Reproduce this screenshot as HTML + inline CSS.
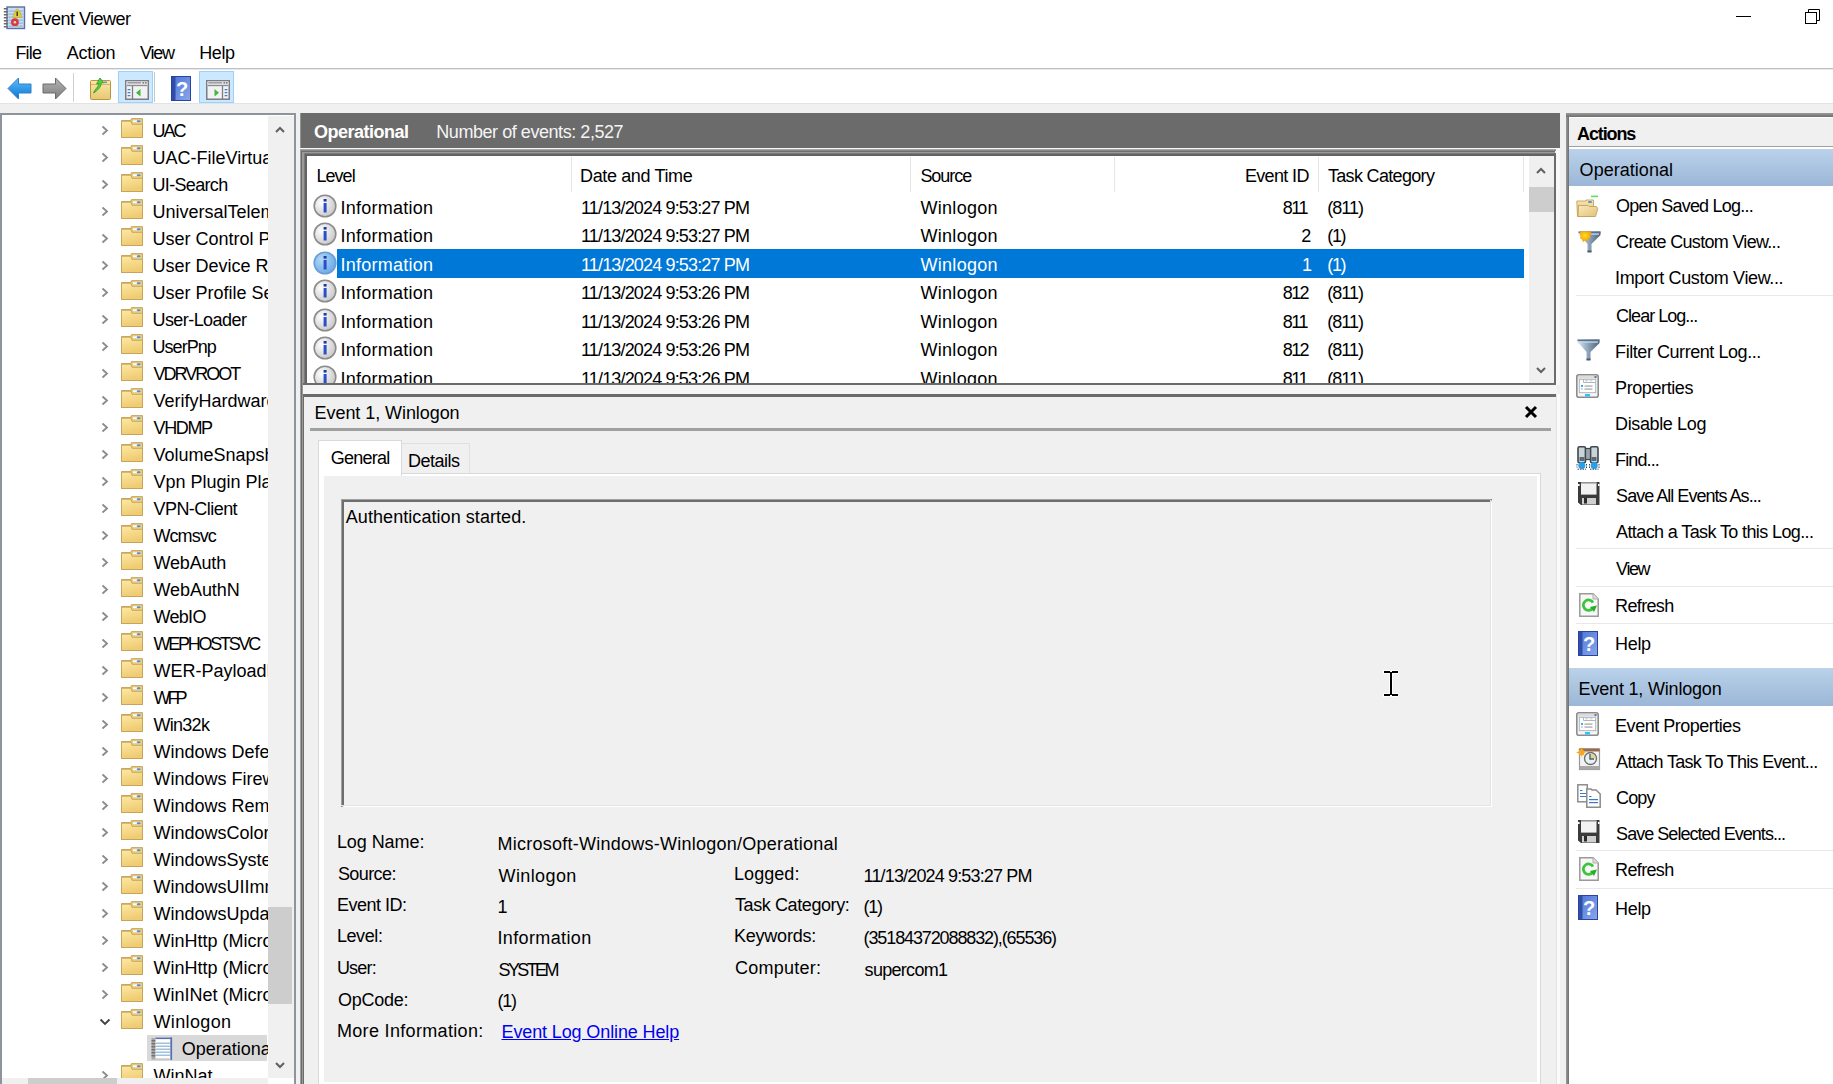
<!DOCTYPE html>
<html><head><meta charset="utf-8"><title>Event Viewer</title><style>
*{box-sizing:border-box}
html,body{margin:0;padding:0}
body{width:1833px;height:1084px;overflow:hidden;position:relative;background:#f0f0f0;font-family:"Liberation Sans",sans-serif;font-size:18px;color:#000}
.a{position:absolute}
.t{position:absolute;white-space:nowrap;line-height:18px;height:18px}
.clip{position:absolute;overflow:hidden}
svg{position:absolute;overflow:visible}
</style></head><body>
<div class="a" style="left:0px;top:0px;width:1833px;height:103px;background:#fff"></div>
<div class="a" style="left:0px;top:68px;width:1833px;height:1px;background:#c0c0c0"></div>
<div class="a" style="left:0px;top:69px;width:1833px;height:1px;background:#e8e8e8"></div>
<div class="a" style="left:0px;top:103px;width:1833px;height:1px;background:#e3e3e3"></div>
<svg style="left:3px;top:6px" width="22" height="23" viewBox="0 0 22 23"><rect x="4" y="1" width="17.5" height="21.5" fill="#c9dcef" stroke="#5a6fa8" stroke-width="1.4"/><rect x="5.5" y="4.5" width="14.5" height="1.3" fill="#9db8dc"/><rect x="5.5" y="7.5" width="14.5" height="1.3" fill="#9db8dc"/><rect x="5.5" y="10.5" width="14.5" height="1.3" fill="#9db8dc"/><rect x="5.5" y="13.5" width="14.5" height="1.3" fill="#9db8dc"/><rect x="5.5" y="16.5" width="14.5" height="1.3" fill="#9db8dc"/><rect x="5.5" y="19.5" width="14.5" height="1.3" fill="#9db8dc"/><rect x="0.8" y="2.0" width="4" height="1.5" fill="#6a6a6a"/><rect x="0.8" y="5.0" width="4" height="1.5" fill="#6a6a6a"/><rect x="0.8" y="8.0" width="4" height="1.5" fill="#6a6a6a"/><rect x="0.8" y="11.0" width="4" height="1.5" fill="#6a6a6a"/><rect x="0.8" y="14.0" width="4" height="1.5" fill="#6a6a6a"/><rect x="0.8" y="17.0" width="4" height="1.5" fill="#6a6a6a"/><rect x="0.8" y="20.0" width="4" height="1.5" fill="#6a6a6a"/><path d="M14.2 3 Q15 3 15.6 4 L18.8 10.5 Q19 11.3 18 11.3 H10.5 Q9.6 11.3 10 10.5 L13 4 Q13.5 3 14.2 3 Z" fill="#e8d02a" stroke="#c8a818" stroke-width="0.6"/><rect x="13.5" y="5.5" width="1.4" height="4.5" fill="#333"/><circle cx="11.9" cy="16.2" r="3.9" fill="#d23c3c"/><circle cx="11.9" cy="16.2" r="1.3" fill="#f4d0d0"/></svg>
<div class="t" style="left:31.10px;top:10px;letter-spacing:-0.539px;">Event Viewer</div>
<div class="a" style="left:1736px;top:16px;width:15px;height:1px;background:#000"></div>
<svg style="left:1804px;top:8px" width="18" height="18" viewBox="0 0 18 18"><rect x="1.5" y="4.5" width="11" height="11" fill="#fff" stroke="#000" stroke-width="1"/><path d="M4.5 4.5 V1.5 H15.5 V12.5 H12.5" fill="none" stroke="#000" stroke-width="1"/></svg>
<div class="t" style="left:15.40px;top:44px;letter-spacing:-0.764px;">File</div>
<div class="t" style="left:66.80px;top:44px;letter-spacing:-0.263px;">Action</div>
<div class="t" style="left:140.00px;top:44px;letter-spacing:-1.230px;">View</div>
<div class="t" style="left:199.30px;top:44px;letter-spacing:-0.436px;">Help</div>
<svg style="left:7px;top:77px" width="26" height="23" viewBox="0 0 26 23"><defs><linearGradient id="gb" x1="0" y1="0" x2="0" y2="1"><stop offset="0" stop-color="#5fc0ff"/><stop offset="1" stop-color="#0a74d0"/></linearGradient></defs><path d="M1 11.5 L11.5 1 V7 H24 V16 H11.5 V22 Z" fill="url(#gb)" stroke="#2f80c8" stroke-width="1"/></svg>
<svg style="left:41px;top:77px" width="26" height="23" viewBox="0 0 26 23"><defs><linearGradient id="gg" x1="0" y1="0" x2="0" y2="1"><stop offset="0" stop-color="#b5b5b5"/><stop offset="1" stop-color="#7d7d7d"/></linearGradient></defs><path d="M25 11.5 L14.5 1 V7 H2 V16 H14.5 V22 Z" fill="url(#gg)" stroke="#6a6a6a" stroke-width="1"/></svg>
<div class="a" style="left:73px;top:73px;width:1px;height:29px;background:#d0d0d0"></div>
<svg style="left:89px;top:77px" width="23" height="23" viewBox="0 0 23 23"><defs><linearGradient id="gfu" x1="0" y1="0" x2="0" y2="1"><stop offset="0" stop-color="#fbe7a8"/><stop offset="1" stop-color="#e9c774"/></linearGradient></defs><rect x="1.5" y="3.5" width="20" height="19" rx="1" fill="url(#gfu)" stroke="#b8963c" stroke-width="1"/><path d="M2 7.5 H21" stroke="#d8b660" stroke-width="1"/><rect x="15" y="4.5" width="3" height="1.6" fill="#5a9ae0"/><path d="M4.5 16 C6 12 9.5 10 10 6.5 L7.5 7 L11 1 L14.8 5.8 L12.3 5.8 C12 10.5 8.5 13.5 4.5 16 Z" fill="#50d040" stroke="#2e9a22" stroke-width="0.8"/></svg>
<div class="a" style="left:118px;top:71px;width:35px;height:32px;background:#cce8ff;border:1px solid #99d1ff"></div>
<svg style="left:124.5px;top:80px" width="24" height="20" viewBox="0 0 24 20"><rect x="0.75" y="0.75" width="22.5" height="18.5" fill="#f2f2f2" stroke="#7a7d84" stroke-width="1.5"/><rect x="1.5" y="1.5" width="21" height="5" fill="#e4e4e4"/><path d="M2.5 2.8 H16" stroke="#8a8d94" stroke-width="1.2"/><rect x="17.5" y="2" width="1.6" height="1.6" fill="#7a7d84"/><rect x="20" y="2" width="1.6" height="1.6" fill="#7a7d84"/><path d="M1.5 5.5 H22.5" stroke="#8a8d94" stroke-width="1.2"/><path d="M7.5 6 V19" stroke="#7a7d84" stroke-width="1.3"/><rect x="2.5" y="9" width="3" height="1.3" rx="0.6" fill="#4a7ad0"/><rect x="2.5" y="12" width="3" height="1.3" rx="0.6" fill="#4a7ad0"/><rect x="2.5" y="15" width="3" height="1.3" rx="0.6" fill="#4a7ad0"/><path d="M15.5 9 V16.5 L11 12.7 Z" fill="#3cb83c"/></svg>
<div class="a" style="left:154px;top:72px;width:1px;height:30px;background:#c8c8c8"></div>
<svg style="left:171px;top:76px" width="20" height="25" viewBox="0 0 20 25"><defs><linearGradient id="gh" x1="0" y1="0" x2="1" y2="1"><stop offset="0" stop-color="#4a74d8"/><stop offset="1" stop-color="#8aa8ea"/></linearGradient></defs><rect x="0" y="0" width="20" height="25" fill="url(#gh)"/><rect x="0" y="0" width="4.5" height="25" fill="#2f4ea8"/><rect x="0.5" y="0.5" width="19" height="24" fill="none" stroke="#2a43a0" stroke-width="1"/><text x="11" y="20" text-anchor="middle" font-family="Liberation Sans" font-weight="bold" font-size="20" fill="#fff">?</text></svg>
<div class="a" style="left:199px;top:71px;width:35px;height:32px;background:#cce8ff;border:1px solid #99d1ff"></div>
<svg style="left:205.5px;top:80px" width="24" height="20" viewBox="0 0 24 20"><rect x="0.75" y="0.75" width="22.5" height="18.5" fill="#f2f2f2" stroke="#7a7d84" stroke-width="1.5"/><rect x="1.5" y="1.5" width="21" height="5" fill="#e4e4e4"/><path d="M2.5 2.8 H16" stroke="#8a8d94" stroke-width="1.2"/><rect x="17.5" y="2" width="1.6" height="1.6" fill="#7a7d84"/><rect x="20" y="2" width="1.6" height="1.6" fill="#7a7d84"/><path d="M1.5 5.5 H22.5" stroke="#8a8d94" stroke-width="1.2"/><path d="M16.5 6 V19" stroke="#7a7d84" stroke-width="1.3"/><rect x="18.5" y="9" width="3" height="1.3" rx="0.6" fill="#4a7ad0"/><rect x="18.5" y="12" width="3" height="1.3" rx="0.6" fill="#4a7ad0"/><rect x="18.5" y="15" width="3" height="1.3" rx="0.6" fill="#4a7ad0"/><path d="M8.5 9 V16.5 L13 12.7 Z" fill="#3cb83c"/></svg>
<div class="a" style="left:0px;top:113px;width:296px;height:971px;background:#fff;border:2px solid #8f939b;border-bottom:none"></div>
<div class="clip" style="left:2px;top:115px;width:266px;height:963px">
<svg style="left:99px;top:10px" width="8" height="11" viewBox="0 0 8 11"><path d="M1.5 1.5 L6 5.5 L1.5 9.5" fill="none" stroke="#8a8a8a" stroke-width="1.8"/></svg>
<svg style="left:119px;top:3px" width="22" height="20" viewBox="0 0 22 20"><defs><linearGradient id="gfd" x1="0" y1="0" x2="0.3" y2="1"><stop offset="0" stop-color="#fde9a4"/><stop offset="1" stop-color="#efcb72"/></linearGradient></defs><path d="M0.5 2.5 H9.5 L10.5 0.6 H21.5 V19.5 H0.5 Z" fill="#e3c06e" stroke="#c4a25a" stroke-width="0.9"/><rect x="11.2" y="1.5" width="9.6" height="4.5" fill="#ead08a"/><rect x="12" y="2.4" width="5" height="1.7" fill="#fff"/><ellipse cx="17.6" cy="3.2" rx="2" ry="1" fill="#4a90e0"/><path d="M0.5 3.2 H10 L11 6.3 H21.5 V19.5 H0.5 Z" fill="url(#gfd)" stroke="#c4a25a" stroke-width="0.9"/></svg>
<div class="t" style="left:150.50px;top:7px;letter-spacing:-2.002px;">UAC</div>
<svg style="left:99px;top:37px" width="8" height="11" viewBox="0 0 8 11"><path d="M1.5 1.5 L6 5.5 L1.5 9.5" fill="none" stroke="#8a8a8a" stroke-width="1.8"/></svg>
<svg style="left:119px;top:30px" width="22" height="20" viewBox="0 0 22 20"><defs><linearGradient id="gfd" x1="0" y1="0" x2="0.3" y2="1"><stop offset="0" stop-color="#fde9a4"/><stop offset="1" stop-color="#efcb72"/></linearGradient></defs><path d="M0.5 2.5 H9.5 L10.5 0.6 H21.5 V19.5 H0.5 Z" fill="#e3c06e" stroke="#c4a25a" stroke-width="0.9"/><rect x="11.2" y="1.5" width="9.6" height="4.5" fill="#ead08a"/><rect x="12" y="2.4" width="5" height="1.7" fill="#fff"/><ellipse cx="17.6" cy="3.2" rx="2" ry="1" fill="#4a90e0"/><path d="M0.5 3.2 H10 L11 6.3 H21.5 V19.5 H0.5 Z" fill="url(#gfd)" stroke="#c4a25a" stroke-width="0.9"/></svg>
<div class="t" style="left:150.50px;top:34px;letter-spacing:0.000px;letter-spacing:0px">UAC-FileVirtualization</div>
<svg style="left:99px;top:64px" width="8" height="11" viewBox="0 0 8 11"><path d="M1.5 1.5 L6 5.5 L1.5 9.5" fill="none" stroke="#8a8a8a" stroke-width="1.8"/></svg>
<svg style="left:119px;top:57px" width="22" height="20" viewBox="0 0 22 20"><defs><linearGradient id="gfd" x1="0" y1="0" x2="0.3" y2="1"><stop offset="0" stop-color="#fde9a4"/><stop offset="1" stop-color="#efcb72"/></linearGradient></defs><path d="M0.5 2.5 H9.5 L10.5 0.6 H21.5 V19.5 H0.5 Z" fill="#e3c06e" stroke="#c4a25a" stroke-width="0.9"/><rect x="11.2" y="1.5" width="9.6" height="4.5" fill="#ead08a"/><rect x="12" y="2.4" width="5" height="1.7" fill="#fff"/><ellipse cx="17.6" cy="3.2" rx="2" ry="1" fill="#4a90e0"/><path d="M0.5 3.2 H10 L11 6.3 H21.5 V19.5 H0.5 Z" fill="url(#gfd)" stroke="#c4a25a" stroke-width="0.9"/></svg>
<div class="t" style="left:150.50px;top:61px;letter-spacing:-0.664px;">UI-Search</div>
<svg style="left:99px;top:91px" width="8" height="11" viewBox="0 0 8 11"><path d="M1.5 1.5 L6 5.5 L1.5 9.5" fill="none" stroke="#8a8a8a" stroke-width="1.8"/></svg>
<svg style="left:119px;top:84px" width="22" height="20" viewBox="0 0 22 20"><defs><linearGradient id="gfd" x1="0" y1="0" x2="0.3" y2="1"><stop offset="0" stop-color="#fde9a4"/><stop offset="1" stop-color="#efcb72"/></linearGradient></defs><path d="M0.5 2.5 H9.5 L10.5 0.6 H21.5 V19.5 H0.5 Z" fill="#e3c06e" stroke="#c4a25a" stroke-width="0.9"/><rect x="11.2" y="1.5" width="9.6" height="4.5" fill="#ead08a"/><rect x="12" y="2.4" width="5" height="1.7" fill="#fff"/><ellipse cx="17.6" cy="3.2" rx="2" ry="1" fill="#4a90e0"/><path d="M0.5 3.2 H10 L11 6.3 H21.5 V19.5 H0.5 Z" fill="url(#gfd)" stroke="#c4a25a" stroke-width="0.9"/></svg>
<div class="t" style="left:150.50px;top:88px;letter-spacing:0.000px;letter-spacing:0px">UniversalTelemetryClient</div>
<svg style="left:99px;top:118px" width="8" height="11" viewBox="0 0 8 11"><path d="M1.5 1.5 L6 5.5 L1.5 9.5" fill="none" stroke="#8a8a8a" stroke-width="1.8"/></svg>
<svg style="left:119px;top:111px" width="22" height="20" viewBox="0 0 22 20"><defs><linearGradient id="gfd" x1="0" y1="0" x2="0.3" y2="1"><stop offset="0" stop-color="#fde9a4"/><stop offset="1" stop-color="#efcb72"/></linearGradient></defs><path d="M0.5 2.5 H9.5 L10.5 0.6 H21.5 V19.5 H0.5 Z" fill="#e3c06e" stroke="#c4a25a" stroke-width="0.9"/><rect x="11.2" y="1.5" width="9.6" height="4.5" fill="#ead08a"/><rect x="12" y="2.4" width="5" height="1.7" fill="#fff"/><ellipse cx="17.6" cy="3.2" rx="2" ry="1" fill="#4a90e0"/><path d="M0.5 3.2 H10 L11 6.3 H21.5 V19.5 H0.5 Z" fill="url(#gfd)" stroke="#c4a25a" stroke-width="0.9"/></svg>
<div class="t" style="left:150.50px;top:115px;letter-spacing:0.000px;letter-spacing:0px">User Control Panel</div>
<svg style="left:99px;top:145px" width="8" height="11" viewBox="0 0 8 11"><path d="M1.5 1.5 L6 5.5 L1.5 9.5" fill="none" stroke="#8a8a8a" stroke-width="1.8"/></svg>
<svg style="left:119px;top:138px" width="22" height="20" viewBox="0 0 22 20"><defs><linearGradient id="gfd" x1="0" y1="0" x2="0.3" y2="1"><stop offset="0" stop-color="#fde9a4"/><stop offset="1" stop-color="#efcb72"/></linearGradient></defs><path d="M0.5 2.5 H9.5 L10.5 0.6 H21.5 V19.5 H0.5 Z" fill="#e3c06e" stroke="#c4a25a" stroke-width="0.9"/><rect x="11.2" y="1.5" width="9.6" height="4.5" fill="#ead08a"/><rect x="12" y="2.4" width="5" height="1.7" fill="#fff"/><ellipse cx="17.6" cy="3.2" rx="2" ry="1" fill="#4a90e0"/><path d="M0.5 3.2 H10 L11 6.3 H21.5 V19.5 H0.5 Z" fill="url(#gfd)" stroke="#c4a25a" stroke-width="0.9"/></svg>
<div class="t" style="left:150.50px;top:142px;letter-spacing:0.000px;letter-spacing:0px">User Device Registration</div>
<svg style="left:99px;top:172px" width="8" height="11" viewBox="0 0 8 11"><path d="M1.5 1.5 L6 5.5 L1.5 9.5" fill="none" stroke="#8a8a8a" stroke-width="1.8"/></svg>
<svg style="left:119px;top:165px" width="22" height="20" viewBox="0 0 22 20"><defs><linearGradient id="gfd" x1="0" y1="0" x2="0.3" y2="1"><stop offset="0" stop-color="#fde9a4"/><stop offset="1" stop-color="#efcb72"/></linearGradient></defs><path d="M0.5 2.5 H9.5 L10.5 0.6 H21.5 V19.5 H0.5 Z" fill="#e3c06e" stroke="#c4a25a" stroke-width="0.9"/><rect x="11.2" y="1.5" width="9.6" height="4.5" fill="#ead08a"/><rect x="12" y="2.4" width="5" height="1.7" fill="#fff"/><ellipse cx="17.6" cy="3.2" rx="2" ry="1" fill="#4a90e0"/><path d="M0.5 3.2 H10 L11 6.3 H21.5 V19.5 H0.5 Z" fill="url(#gfd)" stroke="#c4a25a" stroke-width="0.9"/></svg>
<div class="t" style="left:150.50px;top:169px;letter-spacing:0.000px;letter-spacing:0px">User Profile Service</div>
<svg style="left:99px;top:199px" width="8" height="11" viewBox="0 0 8 11"><path d="M1.5 1.5 L6 5.5 L1.5 9.5" fill="none" stroke="#8a8a8a" stroke-width="1.8"/></svg>
<svg style="left:119px;top:192px" width="22" height="20" viewBox="0 0 22 20"><defs><linearGradient id="gfd" x1="0" y1="0" x2="0.3" y2="1"><stop offset="0" stop-color="#fde9a4"/><stop offset="1" stop-color="#efcb72"/></linearGradient></defs><path d="M0.5 2.5 H9.5 L10.5 0.6 H21.5 V19.5 H0.5 Z" fill="#e3c06e" stroke="#c4a25a" stroke-width="0.9"/><rect x="11.2" y="1.5" width="9.6" height="4.5" fill="#ead08a"/><rect x="12" y="2.4" width="5" height="1.7" fill="#fff"/><ellipse cx="17.6" cy="3.2" rx="2" ry="1" fill="#4a90e0"/><path d="M0.5 3.2 H10 L11 6.3 H21.5 V19.5 H0.5 Z" fill="url(#gfd)" stroke="#c4a25a" stroke-width="0.9"/></svg>
<div class="t" style="left:150.50px;top:196px;letter-spacing:-0.565px;">User-Loader</div>
<svg style="left:99px;top:226px" width="8" height="11" viewBox="0 0 8 11"><path d="M1.5 1.5 L6 5.5 L1.5 9.5" fill="none" stroke="#8a8a8a" stroke-width="1.8"/></svg>
<svg style="left:119px;top:219px" width="22" height="20" viewBox="0 0 22 20"><defs><linearGradient id="gfd" x1="0" y1="0" x2="0.3" y2="1"><stop offset="0" stop-color="#fde9a4"/><stop offset="1" stop-color="#efcb72"/></linearGradient></defs><path d="M0.5 2.5 H9.5 L10.5 0.6 H21.5 V19.5 H0.5 Z" fill="#e3c06e" stroke="#c4a25a" stroke-width="0.9"/><rect x="11.2" y="1.5" width="9.6" height="4.5" fill="#ead08a"/><rect x="12" y="2.4" width="5" height="1.7" fill="#fff"/><ellipse cx="17.6" cy="3.2" rx="2" ry="1" fill="#4a90e0"/><path d="M0.5 3.2 H10 L11 6.3 H21.5 V19.5 H0.5 Z" fill="url(#gfd)" stroke="#c4a25a" stroke-width="0.9"/></svg>
<div class="t" style="left:150.50px;top:223px;letter-spacing:-0.953px;">UserPnp</div>
<svg style="left:99px;top:253px" width="8" height="11" viewBox="0 0 8 11"><path d="M1.5 1.5 L6 5.5 L1.5 9.5" fill="none" stroke="#8a8a8a" stroke-width="1.8"/></svg>
<svg style="left:119px;top:246px" width="22" height="20" viewBox="0 0 22 20"><defs><linearGradient id="gfd" x1="0" y1="0" x2="0.3" y2="1"><stop offset="0" stop-color="#fde9a4"/><stop offset="1" stop-color="#efcb72"/></linearGradient></defs><path d="M0.5 2.5 H9.5 L10.5 0.6 H21.5 V19.5 H0.5 Z" fill="#e3c06e" stroke="#c4a25a" stroke-width="0.9"/><rect x="11.2" y="1.5" width="9.6" height="4.5" fill="#ead08a"/><rect x="12" y="2.4" width="5" height="1.7" fill="#fff"/><ellipse cx="17.6" cy="3.2" rx="2" ry="1" fill="#4a90e0"/><path d="M0.5 3.2 H10 L11 6.3 H21.5 V19.5 H0.5 Z" fill="url(#gfd)" stroke="#c4a25a" stroke-width="0.9"/></svg>
<div class="t" style="left:151.50px;top:250px;letter-spacing:-1.984px;">VDRVROOT</div>
<svg style="left:99px;top:280px" width="8" height="11" viewBox="0 0 8 11"><path d="M1.5 1.5 L6 5.5 L1.5 9.5" fill="none" stroke="#8a8a8a" stroke-width="1.8"/></svg>
<svg style="left:119px;top:273px" width="22" height="20" viewBox="0 0 22 20"><defs><linearGradient id="gfd" x1="0" y1="0" x2="0.3" y2="1"><stop offset="0" stop-color="#fde9a4"/><stop offset="1" stop-color="#efcb72"/></linearGradient></defs><path d="M0.5 2.5 H9.5 L10.5 0.6 H21.5 V19.5 H0.5 Z" fill="#e3c06e" stroke="#c4a25a" stroke-width="0.9"/><rect x="11.2" y="1.5" width="9.6" height="4.5" fill="#ead08a"/><rect x="12" y="2.4" width="5" height="1.7" fill="#fff"/><ellipse cx="17.6" cy="3.2" rx="2" ry="1" fill="#4a90e0"/><path d="M0.5 3.2 H10 L11 6.3 H21.5 V19.5 H0.5 Z" fill="url(#gfd)" stroke="#c4a25a" stroke-width="0.9"/></svg>
<div class="t" style="left:151.50px;top:277px;letter-spacing:0.000px;letter-spacing:0px">VerifyHardwareSecurity</div>
<svg style="left:99px;top:307px" width="8" height="11" viewBox="0 0 8 11"><path d="M1.5 1.5 L6 5.5 L1.5 9.5" fill="none" stroke="#8a8a8a" stroke-width="1.8"/></svg>
<svg style="left:119px;top:300px" width="22" height="20" viewBox="0 0 22 20"><defs><linearGradient id="gfd" x1="0" y1="0" x2="0.3" y2="1"><stop offset="0" stop-color="#fde9a4"/><stop offset="1" stop-color="#efcb72"/></linearGradient></defs><path d="M0.5 2.5 H9.5 L10.5 0.6 H21.5 V19.5 H0.5 Z" fill="#e3c06e" stroke="#c4a25a" stroke-width="0.9"/><rect x="11.2" y="1.5" width="9.6" height="4.5" fill="#ead08a"/><rect x="12" y="2.4" width="5" height="1.7" fill="#fff"/><ellipse cx="17.6" cy="3.2" rx="2" ry="1" fill="#4a90e0"/><path d="M0.5 3.2 H10 L11 6.3 H21.5 V19.5 H0.5 Z" fill="url(#gfd)" stroke="#c4a25a" stroke-width="0.9"/></svg>
<div class="t" style="left:151.50px;top:304px;letter-spacing:-1.375px;">VHDMP</div>
<svg style="left:99px;top:334px" width="8" height="11" viewBox="0 0 8 11"><path d="M1.5 1.5 L6 5.5 L1.5 9.5" fill="none" stroke="#8a8a8a" stroke-width="1.8"/></svg>
<svg style="left:119px;top:327px" width="22" height="20" viewBox="0 0 22 20"><defs><linearGradient id="gfd" x1="0" y1="0" x2="0.3" y2="1"><stop offset="0" stop-color="#fde9a4"/><stop offset="1" stop-color="#efcb72"/></linearGradient></defs><path d="M0.5 2.5 H9.5 L10.5 0.6 H21.5 V19.5 H0.5 Z" fill="#e3c06e" stroke="#c4a25a" stroke-width="0.9"/><rect x="11.2" y="1.5" width="9.6" height="4.5" fill="#ead08a"/><rect x="12" y="2.4" width="5" height="1.7" fill="#fff"/><ellipse cx="17.6" cy="3.2" rx="2" ry="1" fill="#4a90e0"/><path d="M0.5 3.2 H10 L11 6.3 H21.5 V19.5 H0.5 Z" fill="url(#gfd)" stroke="#c4a25a" stroke-width="0.9"/></svg>
<div class="t" style="left:151.50px;top:331px;letter-spacing:0.000px;letter-spacing:0px">VolumeSnapshot-Driver</div>
<svg style="left:99px;top:361px" width="8" height="11" viewBox="0 0 8 11"><path d="M1.5 1.5 L6 5.5 L1.5 9.5" fill="none" stroke="#8a8a8a" stroke-width="1.8"/></svg>
<svg style="left:119px;top:354px" width="22" height="20" viewBox="0 0 22 20"><defs><linearGradient id="gfd" x1="0" y1="0" x2="0.3" y2="1"><stop offset="0" stop-color="#fde9a4"/><stop offset="1" stop-color="#efcb72"/></linearGradient></defs><path d="M0.5 2.5 H9.5 L10.5 0.6 H21.5 V19.5 H0.5 Z" fill="#e3c06e" stroke="#c4a25a" stroke-width="0.9"/><rect x="11.2" y="1.5" width="9.6" height="4.5" fill="#ead08a"/><rect x="12" y="2.4" width="5" height="1.7" fill="#fff"/><ellipse cx="17.6" cy="3.2" rx="2" ry="1" fill="#4a90e0"/><path d="M0.5 3.2 H10 L11 6.3 H21.5 V19.5 H0.5 Z" fill="url(#gfd)" stroke="#c4a25a" stroke-width="0.9"/></svg>
<div class="t" style="left:151.50px;top:358px;letter-spacing:0.000px;letter-spacing:0px">Vpn Plugin Platform</div>
<svg style="left:99px;top:388px" width="8" height="11" viewBox="0 0 8 11"><path d="M1.5 1.5 L6 5.5 L1.5 9.5" fill="none" stroke="#8a8a8a" stroke-width="1.8"/></svg>
<svg style="left:119px;top:381px" width="22" height="20" viewBox="0 0 22 20"><defs><linearGradient id="gfd" x1="0" y1="0" x2="0.3" y2="1"><stop offset="0" stop-color="#fde9a4"/><stop offset="1" stop-color="#efcb72"/></linearGradient></defs><path d="M0.5 2.5 H9.5 L10.5 0.6 H21.5 V19.5 H0.5 Z" fill="#e3c06e" stroke="#c4a25a" stroke-width="0.9"/><rect x="11.2" y="1.5" width="9.6" height="4.5" fill="#ead08a"/><rect x="12" y="2.4" width="5" height="1.7" fill="#fff"/><ellipse cx="17.6" cy="3.2" rx="2" ry="1" fill="#4a90e0"/><path d="M0.5 3.2 H10 L11 6.3 H21.5 V19.5 H0.5 Z" fill="url(#gfd)" stroke="#c4a25a" stroke-width="0.9"/></svg>
<div class="t" style="left:151.50px;top:385px;letter-spacing:-0.547px;">VPN-Client</div>
<svg style="left:99px;top:415px" width="8" height="11" viewBox="0 0 8 11"><path d="M1.5 1.5 L6 5.5 L1.5 9.5" fill="none" stroke="#8a8a8a" stroke-width="1.8"/></svg>
<svg style="left:119px;top:408px" width="22" height="20" viewBox="0 0 22 20"><defs><linearGradient id="gfd" x1="0" y1="0" x2="0.3" y2="1"><stop offset="0" stop-color="#fde9a4"/><stop offset="1" stop-color="#efcb72"/></linearGradient></defs><path d="M0.5 2.5 H9.5 L10.5 0.6 H21.5 V19.5 H0.5 Z" fill="#e3c06e" stroke="#c4a25a" stroke-width="0.9"/><rect x="11.2" y="1.5" width="9.6" height="4.5" fill="#ead08a"/><rect x="12" y="2.4" width="5" height="1.7" fill="#fff"/><ellipse cx="17.6" cy="3.2" rx="2" ry="1" fill="#4a90e0"/><path d="M0.5 3.2 H10 L11 6.3 H21.5 V19.5 H0.5 Z" fill="url(#gfd)" stroke="#c4a25a" stroke-width="0.9"/></svg>
<div class="t" style="left:151.50px;top:412px;letter-spacing:-0.937px;">Wcmsvc</div>
<svg style="left:99px;top:442px" width="8" height="11" viewBox="0 0 8 11"><path d="M1.5 1.5 L6 5.5 L1.5 9.5" fill="none" stroke="#8a8a8a" stroke-width="1.8"/></svg>
<svg style="left:119px;top:435px" width="22" height="20" viewBox="0 0 22 20"><defs><linearGradient id="gfd" x1="0" y1="0" x2="0.3" y2="1"><stop offset="0" stop-color="#fde9a4"/><stop offset="1" stop-color="#efcb72"/></linearGradient></defs><path d="M0.5 2.5 H9.5 L10.5 0.6 H21.5 V19.5 H0.5 Z" fill="#e3c06e" stroke="#c4a25a" stroke-width="0.9"/><rect x="11.2" y="1.5" width="9.6" height="4.5" fill="#ead08a"/><rect x="12" y="2.4" width="5" height="1.7" fill="#fff"/><ellipse cx="17.6" cy="3.2" rx="2" ry="1" fill="#4a90e0"/><path d="M0.5 3.2 H10 L11 6.3 H21.5 V19.5 H0.5 Z" fill="url(#gfd)" stroke="#c4a25a" stroke-width="0.9"/></svg>
<div class="t" style="left:151.50px;top:439px;letter-spacing:-0.167px;">WebAuth</div>
<svg style="left:99px;top:469px" width="8" height="11" viewBox="0 0 8 11"><path d="M1.5 1.5 L6 5.5 L1.5 9.5" fill="none" stroke="#8a8a8a" stroke-width="1.8"/></svg>
<svg style="left:119px;top:462px" width="22" height="20" viewBox="0 0 22 20"><defs><linearGradient id="gfd" x1="0" y1="0" x2="0.3" y2="1"><stop offset="0" stop-color="#fde9a4"/><stop offset="1" stop-color="#efcb72"/></linearGradient></defs><path d="M0.5 2.5 H9.5 L10.5 0.6 H21.5 V19.5 H0.5 Z" fill="#e3c06e" stroke="#c4a25a" stroke-width="0.9"/><rect x="11.2" y="1.5" width="9.6" height="4.5" fill="#ead08a"/><rect x="12" y="2.4" width="5" height="1.7" fill="#fff"/><ellipse cx="17.6" cy="3.2" rx="2" ry="1" fill="#4a90e0"/><path d="M0.5 3.2 H10 L11 6.3 H21.5 V19.5 H0.5 Z" fill="url(#gfd)" stroke="#c4a25a" stroke-width="0.9"/></svg>
<div class="t" style="left:151.50px;top:466px;letter-spacing:-0.073px;">WebAuthN</div>
<svg style="left:99px;top:496px" width="8" height="11" viewBox="0 0 8 11"><path d="M1.5 1.5 L6 5.5 L1.5 9.5" fill="none" stroke="#8a8a8a" stroke-width="1.8"/></svg>
<svg style="left:119px;top:489px" width="22" height="20" viewBox="0 0 22 20"><defs><linearGradient id="gfd" x1="0" y1="0" x2="0.3" y2="1"><stop offset="0" stop-color="#fde9a4"/><stop offset="1" stop-color="#efcb72"/></linearGradient></defs><path d="M0.5 2.5 H9.5 L10.5 0.6 H21.5 V19.5 H0.5 Z" fill="#e3c06e" stroke="#c4a25a" stroke-width="0.9"/><rect x="11.2" y="1.5" width="9.6" height="4.5" fill="#ead08a"/><rect x="12" y="2.4" width="5" height="1.7" fill="#fff"/><ellipse cx="17.6" cy="3.2" rx="2" ry="1" fill="#4a90e0"/><path d="M0.5 3.2 H10 L11 6.3 H21.5 V19.5 H0.5 Z" fill="url(#gfd)" stroke="#c4a25a" stroke-width="0.9"/></svg>
<div class="t" style="left:151.50px;top:493px;letter-spacing:-0.697px;">WebIO</div>
<svg style="left:99px;top:523px" width="8" height="11" viewBox="0 0 8 11"><path d="M1.5 1.5 L6 5.5 L1.5 9.5" fill="none" stroke="#8a8a8a" stroke-width="1.8"/></svg>
<svg style="left:119px;top:516px" width="22" height="20" viewBox="0 0 22 20"><defs><linearGradient id="gfd" x1="0" y1="0" x2="0.3" y2="1"><stop offset="0" stop-color="#fde9a4"/><stop offset="1" stop-color="#efcb72"/></linearGradient></defs><path d="M0.5 2.5 H9.5 L10.5 0.6 H21.5 V19.5 H0.5 Z" fill="#e3c06e" stroke="#c4a25a" stroke-width="0.9"/><rect x="11.2" y="1.5" width="9.6" height="4.5" fill="#ead08a"/><rect x="12" y="2.4" width="5" height="1.7" fill="#fff"/><ellipse cx="17.6" cy="3.2" rx="2" ry="1" fill="#4a90e0"/><path d="M0.5 3.2 H10 L11 6.3 H21.5 V19.5 H0.5 Z" fill="url(#gfd)" stroke="#c4a25a" stroke-width="0.9"/></svg>
<div class="t" style="left:151.50px;top:520px;letter-spacing:-2.246px;">WEPHOSTSVC</div>
<svg style="left:99px;top:550px" width="8" height="11" viewBox="0 0 8 11"><path d="M1.5 1.5 L6 5.5 L1.5 9.5" fill="none" stroke="#8a8a8a" stroke-width="1.8"/></svg>
<svg style="left:119px;top:543px" width="22" height="20" viewBox="0 0 22 20"><defs><linearGradient id="gfd" x1="0" y1="0" x2="0.3" y2="1"><stop offset="0" stop-color="#fde9a4"/><stop offset="1" stop-color="#efcb72"/></linearGradient></defs><path d="M0.5 2.5 H9.5 L10.5 0.6 H21.5 V19.5 H0.5 Z" fill="#e3c06e" stroke="#c4a25a" stroke-width="0.9"/><rect x="11.2" y="1.5" width="9.6" height="4.5" fill="#ead08a"/><rect x="12" y="2.4" width="5" height="1.7" fill="#fff"/><ellipse cx="17.6" cy="3.2" rx="2" ry="1" fill="#4a90e0"/><path d="M0.5 3.2 H10 L11 6.3 H21.5 V19.5 H0.5 Z" fill="url(#gfd)" stroke="#c4a25a" stroke-width="0.9"/></svg>
<div class="t" style="left:151.50px;top:547px;letter-spacing:0.000px;letter-spacing:0px">WER-PayloadHealth</div>
<svg style="left:99px;top:577px" width="8" height="11" viewBox="0 0 8 11"><path d="M1.5 1.5 L6 5.5 L1.5 9.5" fill="none" stroke="#8a8a8a" stroke-width="1.8"/></svg>
<svg style="left:119px;top:570px" width="22" height="20" viewBox="0 0 22 20"><defs><linearGradient id="gfd" x1="0" y1="0" x2="0.3" y2="1"><stop offset="0" stop-color="#fde9a4"/><stop offset="1" stop-color="#efcb72"/></linearGradient></defs><path d="M0.5 2.5 H9.5 L10.5 0.6 H21.5 V19.5 H0.5 Z" fill="#e3c06e" stroke="#c4a25a" stroke-width="0.9"/><rect x="11.2" y="1.5" width="9.6" height="4.5" fill="#ead08a"/><rect x="12" y="2.4" width="5" height="1.7" fill="#fff"/><ellipse cx="17.6" cy="3.2" rx="2" ry="1" fill="#4a90e0"/><path d="M0.5 3.2 H10 L11 6.3 H21.5 V19.5 H0.5 Z" fill="url(#gfd)" stroke="#c4a25a" stroke-width="0.9"/></svg>
<div class="t" style="left:151.50px;top:574px;letter-spacing:-3.042px;">WFP</div>
<svg style="left:99px;top:604px" width="8" height="11" viewBox="0 0 8 11"><path d="M1.5 1.5 L6 5.5 L1.5 9.5" fill="none" stroke="#8a8a8a" stroke-width="1.8"/></svg>
<svg style="left:119px;top:597px" width="22" height="20" viewBox="0 0 22 20"><defs><linearGradient id="gfd" x1="0" y1="0" x2="0.3" y2="1"><stop offset="0" stop-color="#fde9a4"/><stop offset="1" stop-color="#efcb72"/></linearGradient></defs><path d="M0.5 2.5 H9.5 L10.5 0.6 H21.5 V19.5 H0.5 Z" fill="#e3c06e" stroke="#c4a25a" stroke-width="0.9"/><rect x="11.2" y="1.5" width="9.6" height="4.5" fill="#ead08a"/><rect x="12" y="2.4" width="5" height="1.7" fill="#fff"/><ellipse cx="17.6" cy="3.2" rx="2" ry="1" fill="#4a90e0"/><path d="M0.5 3.2 H10 L11 6.3 H21.5 V19.5 H0.5 Z" fill="url(#gfd)" stroke="#c4a25a" stroke-width="0.9"/></svg>
<div class="t" style="left:151.50px;top:601px;letter-spacing:-0.724px;">Win32k</div>
<svg style="left:99px;top:631px" width="8" height="11" viewBox="0 0 8 11"><path d="M1.5 1.5 L6 5.5 L1.5 9.5" fill="none" stroke="#8a8a8a" stroke-width="1.8"/></svg>
<svg style="left:119px;top:624px" width="22" height="20" viewBox="0 0 22 20"><defs><linearGradient id="gfd" x1="0" y1="0" x2="0.3" y2="1"><stop offset="0" stop-color="#fde9a4"/><stop offset="1" stop-color="#efcb72"/></linearGradient></defs><path d="M0.5 2.5 H9.5 L10.5 0.6 H21.5 V19.5 H0.5 Z" fill="#e3c06e" stroke="#c4a25a" stroke-width="0.9"/><rect x="11.2" y="1.5" width="9.6" height="4.5" fill="#ead08a"/><rect x="12" y="2.4" width="5" height="1.7" fill="#fff"/><ellipse cx="17.6" cy="3.2" rx="2" ry="1" fill="#4a90e0"/><path d="M0.5 3.2 H10 L11 6.3 H21.5 V19.5 H0.5 Z" fill="url(#gfd)" stroke="#c4a25a" stroke-width="0.9"/></svg>
<div class="t" style="left:151.50px;top:628px;letter-spacing:0.000px;letter-spacing:0px">Windows Defender</div>
<svg style="left:99px;top:658px" width="8" height="11" viewBox="0 0 8 11"><path d="M1.5 1.5 L6 5.5 L1.5 9.5" fill="none" stroke="#8a8a8a" stroke-width="1.8"/></svg>
<svg style="left:119px;top:651px" width="22" height="20" viewBox="0 0 22 20"><defs><linearGradient id="gfd" x1="0" y1="0" x2="0.3" y2="1"><stop offset="0" stop-color="#fde9a4"/><stop offset="1" stop-color="#efcb72"/></linearGradient></defs><path d="M0.5 2.5 H9.5 L10.5 0.6 H21.5 V19.5 H0.5 Z" fill="#e3c06e" stroke="#c4a25a" stroke-width="0.9"/><rect x="11.2" y="1.5" width="9.6" height="4.5" fill="#ead08a"/><rect x="12" y="2.4" width="5" height="1.7" fill="#fff"/><ellipse cx="17.6" cy="3.2" rx="2" ry="1" fill="#4a90e0"/><path d="M0.5 3.2 H10 L11 6.3 H21.5 V19.5 H0.5 Z" fill="url(#gfd)" stroke="#c4a25a" stroke-width="0.9"/></svg>
<div class="t" style="left:151.50px;top:655px;letter-spacing:0.000px;letter-spacing:0px">Windows Firewall With Advanced Security</div>
<svg style="left:99px;top:685px" width="8" height="11" viewBox="0 0 8 11"><path d="M1.5 1.5 L6 5.5 L1.5 9.5" fill="none" stroke="#8a8a8a" stroke-width="1.8"/></svg>
<svg style="left:119px;top:678px" width="22" height="20" viewBox="0 0 22 20"><defs><linearGradient id="gfd" x1="0" y1="0" x2="0.3" y2="1"><stop offset="0" stop-color="#fde9a4"/><stop offset="1" stop-color="#efcb72"/></linearGradient></defs><path d="M0.5 2.5 H9.5 L10.5 0.6 H21.5 V19.5 H0.5 Z" fill="#e3c06e" stroke="#c4a25a" stroke-width="0.9"/><rect x="11.2" y="1.5" width="9.6" height="4.5" fill="#ead08a"/><rect x="12" y="2.4" width="5" height="1.7" fill="#fff"/><ellipse cx="17.6" cy="3.2" rx="2" ry="1" fill="#4a90e0"/><path d="M0.5 3.2 H10 L11 6.3 H21.5 V19.5 H0.5 Z" fill="url(#gfd)" stroke="#c4a25a" stroke-width="0.9"/></svg>
<div class="t" style="left:151.50px;top:682px;letter-spacing:0.000px;letter-spacing:0px">Windows Remote Management</div>
<svg style="left:99px;top:712px" width="8" height="11" viewBox="0 0 8 11"><path d="M1.5 1.5 L6 5.5 L1.5 9.5" fill="none" stroke="#8a8a8a" stroke-width="1.8"/></svg>
<svg style="left:119px;top:705px" width="22" height="20" viewBox="0 0 22 20"><defs><linearGradient id="gfd" x1="0" y1="0" x2="0.3" y2="1"><stop offset="0" stop-color="#fde9a4"/><stop offset="1" stop-color="#efcb72"/></linearGradient></defs><path d="M0.5 2.5 H9.5 L10.5 0.6 H21.5 V19.5 H0.5 Z" fill="#e3c06e" stroke="#c4a25a" stroke-width="0.9"/><rect x="11.2" y="1.5" width="9.6" height="4.5" fill="#ead08a"/><rect x="12" y="2.4" width="5" height="1.7" fill="#fff"/><ellipse cx="17.6" cy="3.2" rx="2" ry="1" fill="#4a90e0"/><path d="M0.5 3.2 H10 L11 6.3 H21.5 V19.5 H0.5 Z" fill="url(#gfd)" stroke="#c4a25a" stroke-width="0.9"/></svg>
<div class="t" style="left:151.50px;top:709px;letter-spacing:0.000px;letter-spacing:0px">WindowsColorSystem</div>
<svg style="left:99px;top:739px" width="8" height="11" viewBox="0 0 8 11"><path d="M1.5 1.5 L6 5.5 L1.5 9.5" fill="none" stroke="#8a8a8a" stroke-width="1.8"/></svg>
<svg style="left:119px;top:732px" width="22" height="20" viewBox="0 0 22 20"><defs><linearGradient id="gfd" x1="0" y1="0" x2="0.3" y2="1"><stop offset="0" stop-color="#fde9a4"/><stop offset="1" stop-color="#efcb72"/></linearGradient></defs><path d="M0.5 2.5 H9.5 L10.5 0.6 H21.5 V19.5 H0.5 Z" fill="#e3c06e" stroke="#c4a25a" stroke-width="0.9"/><rect x="11.2" y="1.5" width="9.6" height="4.5" fill="#ead08a"/><rect x="12" y="2.4" width="5" height="1.7" fill="#fff"/><ellipse cx="17.6" cy="3.2" rx="2" ry="1" fill="#4a90e0"/><path d="M0.5 3.2 H10 L11 6.3 H21.5 V19.5 H0.5 Z" fill="url(#gfd)" stroke="#c4a25a" stroke-width="0.9"/></svg>
<div class="t" style="left:151.50px;top:736px;letter-spacing:0.000px;letter-spacing:0px">WindowsSystemAssessmentTool</div>
<svg style="left:99px;top:766px" width="8" height="11" viewBox="0 0 8 11"><path d="M1.5 1.5 L6 5.5 L1.5 9.5" fill="none" stroke="#8a8a8a" stroke-width="1.8"/></svg>
<svg style="left:119px;top:759px" width="22" height="20" viewBox="0 0 22 20"><defs><linearGradient id="gfd" x1="0" y1="0" x2="0.3" y2="1"><stop offset="0" stop-color="#fde9a4"/><stop offset="1" stop-color="#efcb72"/></linearGradient></defs><path d="M0.5 2.5 H9.5 L10.5 0.6 H21.5 V19.5 H0.5 Z" fill="#e3c06e" stroke="#c4a25a" stroke-width="0.9"/><rect x="11.2" y="1.5" width="9.6" height="4.5" fill="#ead08a"/><rect x="12" y="2.4" width="5" height="1.7" fill="#fff"/><ellipse cx="17.6" cy="3.2" rx="2" ry="1" fill="#4a90e0"/><path d="M0.5 3.2 H10 L11 6.3 H21.5 V19.5 H0.5 Z" fill="url(#gfd)" stroke="#c4a25a" stroke-width="0.9"/></svg>
<div class="t" style="left:151.50px;top:763px;letter-spacing:0.000px;letter-spacing:0px">WindowsUIImmersive</div>
<svg style="left:99px;top:793px" width="8" height="11" viewBox="0 0 8 11"><path d="M1.5 1.5 L6 5.5 L1.5 9.5" fill="none" stroke="#8a8a8a" stroke-width="1.8"/></svg>
<svg style="left:119px;top:786px" width="22" height="20" viewBox="0 0 22 20"><defs><linearGradient id="gfd" x1="0" y1="0" x2="0.3" y2="1"><stop offset="0" stop-color="#fde9a4"/><stop offset="1" stop-color="#efcb72"/></linearGradient></defs><path d="M0.5 2.5 H9.5 L10.5 0.6 H21.5 V19.5 H0.5 Z" fill="#e3c06e" stroke="#c4a25a" stroke-width="0.9"/><rect x="11.2" y="1.5" width="9.6" height="4.5" fill="#ead08a"/><rect x="12" y="2.4" width="5" height="1.7" fill="#fff"/><ellipse cx="17.6" cy="3.2" rx="2" ry="1" fill="#4a90e0"/><path d="M0.5 3.2 H10 L11 6.3 H21.5 V19.5 H0.5 Z" fill="url(#gfd)" stroke="#c4a25a" stroke-width="0.9"/></svg>
<div class="t" style="left:151.50px;top:790px;letter-spacing:0.000px;letter-spacing:0px">WindowsUpdateClient</div>
<svg style="left:99px;top:820px" width="8" height="11" viewBox="0 0 8 11"><path d="M1.5 1.5 L6 5.5 L1.5 9.5" fill="none" stroke="#8a8a8a" stroke-width="1.8"/></svg>
<svg style="left:119px;top:813px" width="22" height="20" viewBox="0 0 22 20"><defs><linearGradient id="gfd" x1="0" y1="0" x2="0.3" y2="1"><stop offset="0" stop-color="#fde9a4"/><stop offset="1" stop-color="#efcb72"/></linearGradient></defs><path d="M0.5 2.5 H9.5 L10.5 0.6 H21.5 V19.5 H0.5 Z" fill="#e3c06e" stroke="#c4a25a" stroke-width="0.9"/><rect x="11.2" y="1.5" width="9.6" height="4.5" fill="#ead08a"/><rect x="12" y="2.4" width="5" height="1.7" fill="#fff"/><ellipse cx="17.6" cy="3.2" rx="2" ry="1" fill="#4a90e0"/><path d="M0.5 3.2 H10 L11 6.3 H21.5 V19.5 H0.5 Z" fill="url(#gfd)" stroke="#c4a25a" stroke-width="0.9"/></svg>
<div class="t" style="left:151.50px;top:817px;letter-spacing:0.000px;letter-spacing:0px">WinHttp (Microsoft-Windows-WinHttp)</div>
<svg style="left:99px;top:847px" width="8" height="11" viewBox="0 0 8 11"><path d="M1.5 1.5 L6 5.5 L1.5 9.5" fill="none" stroke="#8a8a8a" stroke-width="1.8"/></svg>
<svg style="left:119px;top:840px" width="22" height="20" viewBox="0 0 22 20"><defs><linearGradient id="gfd" x1="0" y1="0" x2="0.3" y2="1"><stop offset="0" stop-color="#fde9a4"/><stop offset="1" stop-color="#efcb72"/></linearGradient></defs><path d="M0.5 2.5 H9.5 L10.5 0.6 H21.5 V19.5 H0.5 Z" fill="#e3c06e" stroke="#c4a25a" stroke-width="0.9"/><rect x="11.2" y="1.5" width="9.6" height="4.5" fill="#ead08a"/><rect x="12" y="2.4" width="5" height="1.7" fill="#fff"/><ellipse cx="17.6" cy="3.2" rx="2" ry="1" fill="#4a90e0"/><path d="M0.5 3.2 H10 L11 6.3 H21.5 V19.5 H0.5 Z" fill="url(#gfd)" stroke="#c4a25a" stroke-width="0.9"/></svg>
<div class="t" style="left:151.50px;top:844px;letter-spacing:0.000px;letter-spacing:0px">WinHttp (Microsoft-Windows-WinINet-Capture)</div>
<svg style="left:99px;top:874px" width="8" height="11" viewBox="0 0 8 11"><path d="M1.5 1.5 L6 5.5 L1.5 9.5" fill="none" stroke="#8a8a8a" stroke-width="1.8"/></svg>
<svg style="left:119px;top:867px" width="22" height="20" viewBox="0 0 22 20"><defs><linearGradient id="gfd" x1="0" y1="0" x2="0.3" y2="1"><stop offset="0" stop-color="#fde9a4"/><stop offset="1" stop-color="#efcb72"/></linearGradient></defs><path d="M0.5 2.5 H9.5 L10.5 0.6 H21.5 V19.5 H0.5 Z" fill="#e3c06e" stroke="#c4a25a" stroke-width="0.9"/><rect x="11.2" y="1.5" width="9.6" height="4.5" fill="#ead08a"/><rect x="12" y="2.4" width="5" height="1.7" fill="#fff"/><ellipse cx="17.6" cy="3.2" rx="2" ry="1" fill="#4a90e0"/><path d="M0.5 3.2 H10 L11 6.3 H21.5 V19.5 H0.5 Z" fill="url(#gfd)" stroke="#c4a25a" stroke-width="0.9"/></svg>
<div class="t" style="left:151.50px;top:871px;letter-spacing:0.000px;letter-spacing:0px">WinINet (Microsoft-WIndows-WinINet)</div>
<svg style="left:97px;top:903px" width="12" height="8" viewBox="0 0 12 8"><path d="M1.5 1.5 L6 6 L10.5 1.5" fill="none" stroke="#404040" stroke-width="1.8"/></svg>
<svg style="left:119px;top:894px" width="22" height="20" viewBox="0 0 22 20"><defs><linearGradient id="gfd" x1="0" y1="0" x2="0.3" y2="1"><stop offset="0" stop-color="#fde9a4"/><stop offset="1" stop-color="#efcb72"/></linearGradient></defs><path d="M0.5 2.5 H9.5 L10.5 0.6 H21.5 V19.5 H0.5 Z" fill="#e3c06e" stroke="#c4a25a" stroke-width="0.9"/><rect x="11.2" y="1.5" width="9.6" height="4.5" fill="#ead08a"/><rect x="12" y="2.4" width="5" height="1.7" fill="#fff"/><ellipse cx="17.6" cy="3.2" rx="2" ry="1" fill="#4a90e0"/><path d="M0.5 3.2 H10 L11 6.3 H21.5 V19.5 H0.5 Z" fill="url(#gfd)" stroke="#c4a25a" stroke-width="0.9"/></svg>
<div class="t" style="left:151.50px;top:898px;letter-spacing:0.367px;">Winlogon</div>
<div class="a" style="left:145px;top:920px;width:120px;height:26px;background:#d9d9d9"></div>
<svg style="left:149px;top:922px" width="22" height="23" viewBox="0 0 22 23"><rect x="0.5" y="1" width="5" height="21.5" fill="#a8a8a8"/><rect x="0.5" y="3" width="4.5" height="1.4" fill="#707070"/><rect x="0.5" y="6" width="4.5" height="1.4" fill="#707070"/><rect x="0.5" y="9" width="4.5" height="1.4" fill="#707070"/><rect x="0.5" y="12" width="4.5" height="1.4" fill="#707070"/><rect x="0.5" y="15" width="4.5" height="1.4" fill="#707070"/><rect x="0.5" y="18" width="4.5" height="1.4" fill="#707070"/><rect x="4.5" y="0.5" width="16.5" height="22" fill="#fff"/><rect x="4.5" y="0.5" width="16.5" height="1.6" fill="#5a6fb0"/><rect x="19.3" y="0.5" width="1.8" height="22.5" fill="#5a6fb0"/><rect x="4.5" y="21.5" width="15" height="1.2" fill="#b8b8b8"/><rect x="5" y="5.5" width="14" height="1.5" fill="#9fc2dc"/><rect x="5" y="8.5" width="14" height="1.5" fill="#9fc2dc"/><rect x="5" y="11.5" width="14" height="1.5" fill="#9fc2dc"/><rect x="5" y="14.5" width="14" height="1.5" fill="#9fc2dc"/><rect x="5" y="17.5" width="14" height="1.5" fill="#9fc2dc"/></svg>
<div class="t" style="left:179.70px;top:925px;letter-spacing:0.000px;letter-spacing:0px">Operational</div>
<svg style="left:99px;top:955px" width="8" height="11" viewBox="0 0 8 11"><path d="M1.5 1.5 L6 5.5 L1.5 9.5" fill="none" stroke="#8a8a8a" stroke-width="1.8"/></svg>
<svg style="left:119px;top:948px" width="22" height="20" viewBox="0 0 22 20"><defs><linearGradient id="gfd" x1="0" y1="0" x2="0.3" y2="1"><stop offset="0" stop-color="#fde9a4"/><stop offset="1" stop-color="#efcb72"/></linearGradient></defs><path d="M0.5 2.5 H9.5 L10.5 0.6 H21.5 V19.5 H0.5 Z" fill="#e3c06e" stroke="#c4a25a" stroke-width="0.9"/><rect x="11.2" y="1.5" width="9.6" height="4.5" fill="#ead08a"/><rect x="12" y="2.4" width="5" height="1.7" fill="#fff"/><ellipse cx="17.6" cy="3.2" rx="2" ry="1" fill="#4a90e0"/><path d="M0.5 3.2 H10 L11 6.3 H21.5 V19.5 H0.5 Z" fill="url(#gfd)" stroke="#c4a25a" stroke-width="0.9"/></svg>
<div class="t" style="left:151.50px;top:952px;letter-spacing:0.000px;letter-spacing:0px">WinNat</div>
</div>
<div class="a" style="left:268px;top:116px;width:26px;height:962px;background:#f0f0f0"></div>
<svg style="left:274.5px;top:125.5px" width="10" height="7" viewBox="0 0 10 7"><path d="M1 6 L5 2 L9 6" fill="none" stroke="#606060" stroke-width="2"/></svg>
<svg style="left:275px;top:1062px" width="10" height="7" viewBox="0 0 10 7"><path d="M1 1 L5 5 L9 1" fill="none" stroke="#606060" stroke-width="2"/></svg>
<div class="a" style="left:268px;top:907px;width:24px;height:97px;background:#cdcdcd"></div>
<div class="a" style="left:2px;top:1078px;width:266px;height:6px;background:#f0f0f0"></div>
<div class="a" style="left:28px;top:1078px;width:89px;height:6px;background:#cdcdcd"></div>
<div class="a" style="left:300px;top:113px;width:1260px;height:35px;background:#6b6b6b;border-left:1px solid #959595"></div>
<div class="t" style="left:314.00px;top:123px;letter-spacing:-0.502px;font-weight:bold;color:#fff">Operational</div>
<div class="t" style="left:436.30px;top:123px;letter-spacing:-0.446px;color:#f4f4f4">Number of events: 2,527</div>
<div class="a" style="left:300px;top:148px;width:1260px;height:1px;background:#f7f7f7"></div>
<div class="a" style="left:300px;top:149px;width:1px;height:935px;background:#a0a0a0"></div>
<div class="a" style="left:301px;top:149px;width:1px;height:935px;background:#6b6b6b"></div>
<div class="a" style="left:302px;top:149px;width:1px;height:935px;background:#9a9a9a"></div>
<div class="a" style="left:300px;top:149px;width:1256px;height:1px;background:#a8a8a8"></div>
<div class="a" style="left:301px;top:150px;width:1255px;height:1px;background:#888"></div>
<div class="a" style="left:302px;top:151px;width:1253px;height:1px;background:#707070"></div>
<div class="a" style="left:303px;top:152px;width:1252px;height:1px;background:#9a9a9a"></div>
<div class="a" style="left:304px;top:153px;width:1251px;height:1px;background:#7a7a7a"></div>
<div class="a" style="left:305px;top:154px;width:1250px;height:2px;background:#636363"></div>
<div class="a" style="left:303px;top:152px;width:1px;height:233px;background:#9a9a9a"></div>
<div class="a" style="left:304px;top:153px;width:1px;height:232px;background:#7a7a7a"></div>
<div class="a" style="left:305px;top:154px;width:2px;height:231px;background:#636363"></div>
<div class="a" style="left:1554px;top:153px;width:2px;height:232px;background:#6b6b6b"></div>
<div class="a" style="left:303px;top:383px;width:1253px;height:2px;background:#6b6b6b"></div>
<div class="a" style="left:307px;top:156px;width:1247px;height:227px;background:#fff"></div>
<div class="a" style="left:1556px;top:149px;width:4px;height:236px;background:#f8f8f8"></div>
<div class="a" style="left:571px;top:157px;width:1px;height:35px;background:#e5e5e5"></div>
<div class="a" style="left:910px;top:157px;width:1px;height:35px;background:#e5e5e5"></div>
<div class="a" style="left:1114px;top:157px;width:1px;height:35px;background:#e5e5e5"></div>
<div class="a" style="left:1318px;top:157px;width:1px;height:35px;background:#e5e5e5"></div>
<div class="a" style="left:1523px;top:157px;width:1px;height:35px;background:#e5e5e5"></div>
<div class="t" style="left:316.40px;top:167px;letter-spacing:-0.933px;">Level</div>
<div class="t" style="left:580.00px;top:167px;letter-spacing:-0.365px;">Date and Time</div>
<div class="t" style="left:920.40px;top:167px;letter-spacing:-1.044px;">Source</div>
<div class="t" style="left:1244.90px;top:167px;letter-spacing:-0.647px;">Event ID</div>
<div class="t" style="left:1327.90px;top:167px;letter-spacing:-0.671px;">Task Category</div>
<div class="clip" style="left:307px;top:192px;width:1222px;height:191px">
<svg style="left:6px;top:2px" width="24" height="24" viewBox="0 0 24 24"><defs><radialGradient id="ig0" cx="0.35" cy="0.35" r="0.7"><stop offset="0" stop-color="#ffffff"/><stop offset="1" stop-color="#c8c8c8"/></radialGradient></defs><circle cx="12" cy="12" r="10.8" fill="url(#ig0)" stroke="#8c8c8c" stroke-width="1.6"/><rect x="10.6" y="5" width="3" height="2.6" fill="#1b3aa8"/><rect x="10.6" y="9" width="3" height="9.5" fill="#2a50c8"/></svg>
<div class="t" style="left:33.60px;top:7px;letter-spacing:0.247px;color:#000">Information</div>
<div class="t" style="left:274.00px;top:7px;letter-spacing:-0.841px;color:#000">11/13/2024 9:53:27 PM</div>
<div class="t" style="left:613.40px;top:7px;letter-spacing:0.310px;color:#000">Winlogon</div>
<div class="t" style="left:975.80px;top:7px;letter-spacing:-1.443px;color:#000">811</div>
<div class="t" style="left:1020.30px;top:7px;letter-spacing:-0.998px;color:#000">(811)</div>
<svg style="left:6px;top:30px" width="24" height="24" viewBox="0 0 24 24"><defs><radialGradient id="ig0" cx="0.35" cy="0.35" r="0.7"><stop offset="0" stop-color="#ffffff"/><stop offset="1" stop-color="#c8c8c8"/></radialGradient></defs><circle cx="12" cy="12" r="10.8" fill="url(#ig0)" stroke="#8c8c8c" stroke-width="1.6"/><rect x="10.6" y="5" width="3" height="2.6" fill="#1b3aa8"/><rect x="10.6" y="9" width="3" height="9.5" fill="#2a50c8"/></svg>
<div class="t" style="left:33.60px;top:35px;letter-spacing:0.247px;color:#000">Information</div>
<div class="t" style="left:274.00px;top:35px;letter-spacing:-0.841px;color:#000">11/13/2024 9:53:27 PM</div>
<div class="t" style="left:613.40px;top:35px;letter-spacing:0.310px;color:#000">Winlogon</div>
<div class="t" style="left:994.20px;top:35px;letter-spacing:0.000px;color:#000">2</div>
<div class="t" style="left:1020.30px;top:35px;letter-spacing:-1.402px;color:#000">(1)</div>
<div class="a" style="left:30px;top:57px;width:1187px;height:29px;background:#0078d7"></div>
<svg style="left:6px;top:59px" width="24" height="24" viewBox="0 0 24 24"><defs><radialGradient id="ig1" cx="0.35" cy="0.35" r="0.7"><stop offset="0" stop-color="#b4d8f6"/><stop offset="1" stop-color="#6aaae6"/></radialGradient></defs><circle cx="12" cy="12" r="10.8" fill="url(#ig1)" stroke="#6a9fd6" stroke-width="1.6"/><rect x="10.6" y="5" width="3" height="2.6" fill="#1b3aa8"/><rect x="10.6" y="9" width="3" height="9.5" fill="#2a50c8"/></svg>
<div class="t" style="left:33.60px;top:64px;letter-spacing:0.247px;color:#fff">Information</div>
<div class="t" style="left:274.00px;top:64px;letter-spacing:-0.841px;color:#fff">11/13/2024 9:53:27 PM</div>
<div class="t" style="left:613.40px;top:64px;letter-spacing:0.310px;color:#fff">Winlogon</div>
<div class="t" style="left:995.00px;top:64px;letter-spacing:0.000px;color:#fff">1</div>
<div class="t" style="left:1020.30px;top:64px;letter-spacing:-1.402px;color:#fff">(1)</div>
<svg style="left:6px;top:87px" width="24" height="24" viewBox="0 0 24 24"><defs><radialGradient id="ig0" cx="0.35" cy="0.35" r="0.7"><stop offset="0" stop-color="#ffffff"/><stop offset="1" stop-color="#c8c8c8"/></radialGradient></defs><circle cx="12" cy="12" r="10.8" fill="url(#ig0)" stroke="#8c8c8c" stroke-width="1.6"/><rect x="10.6" y="5" width="3" height="2.6" fill="#1b3aa8"/><rect x="10.6" y="9" width="3" height="9.5" fill="#2a50c8"/></svg>
<div class="t" style="left:33.60px;top:92px;letter-spacing:0.247px;color:#000">Information</div>
<div class="t" style="left:274.00px;top:92px;letter-spacing:-0.841px;color:#000">11/13/2024 9:53:26 PM</div>
<div class="t" style="left:613.40px;top:92px;letter-spacing:0.310px;color:#000">Winlogon</div>
<div class="t" style="left:975.80px;top:92px;letter-spacing:-1.661px;color:#000">812</div>
<div class="t" style="left:1020.30px;top:92px;letter-spacing:-0.998px;color:#000">(811)</div>
<svg style="left:6px;top:116px" width="24" height="24" viewBox="0 0 24 24"><defs><radialGradient id="ig0" cx="0.35" cy="0.35" r="0.7"><stop offset="0" stop-color="#ffffff"/><stop offset="1" stop-color="#c8c8c8"/></radialGradient></defs><circle cx="12" cy="12" r="10.8" fill="url(#ig0)" stroke="#8c8c8c" stroke-width="1.6"/><rect x="10.6" y="5" width="3" height="2.6" fill="#1b3aa8"/><rect x="10.6" y="9" width="3" height="9.5" fill="#2a50c8"/></svg>
<div class="t" style="left:33.60px;top:121px;letter-spacing:0.247px;color:#000">Information</div>
<div class="t" style="left:274.00px;top:121px;letter-spacing:-0.841px;color:#000">11/13/2024 9:53:26 PM</div>
<div class="t" style="left:613.40px;top:121px;letter-spacing:0.310px;color:#000">Winlogon</div>
<div class="t" style="left:975.80px;top:121px;letter-spacing:-1.443px;color:#000">811</div>
<div class="t" style="left:1020.30px;top:121px;letter-spacing:-0.998px;color:#000">(811)</div>
<svg style="left:6px;top:144px" width="24" height="24" viewBox="0 0 24 24"><defs><radialGradient id="ig0" cx="0.35" cy="0.35" r="0.7"><stop offset="0" stop-color="#ffffff"/><stop offset="1" stop-color="#c8c8c8"/></radialGradient></defs><circle cx="12" cy="12" r="10.8" fill="url(#ig0)" stroke="#8c8c8c" stroke-width="1.6"/><rect x="10.6" y="5" width="3" height="2.6" fill="#1b3aa8"/><rect x="10.6" y="9" width="3" height="9.5" fill="#2a50c8"/></svg>
<div class="t" style="left:33.60px;top:149px;letter-spacing:0.247px;color:#000">Information</div>
<div class="t" style="left:274.00px;top:149px;letter-spacing:-0.841px;color:#000">11/13/2024 9:53:26 PM</div>
<div class="t" style="left:613.40px;top:149px;letter-spacing:0.310px;color:#000">Winlogon</div>
<div class="t" style="left:975.80px;top:149px;letter-spacing:-1.661px;color:#000">812</div>
<div class="t" style="left:1020.30px;top:149px;letter-spacing:-0.998px;color:#000">(811)</div>
<svg style="left:6px;top:173px" width="24" height="24" viewBox="0 0 24 24"><defs><radialGradient id="ig0" cx="0.35" cy="0.35" r="0.7"><stop offset="0" stop-color="#ffffff"/><stop offset="1" stop-color="#c8c8c8"/></radialGradient></defs><circle cx="12" cy="12" r="10.8" fill="url(#ig0)" stroke="#8c8c8c" stroke-width="1.6"/><rect x="10.6" y="5" width="3" height="2.6" fill="#1b3aa8"/><rect x="10.6" y="9" width="3" height="9.5" fill="#2a50c8"/></svg>
<div class="t" style="left:33.60px;top:178px;letter-spacing:0.247px;color:#000">Information</div>
<div class="t" style="left:274.00px;top:178px;letter-spacing:-0.841px;color:#000">11/13/2024 9:53:26 PM</div>
<div class="t" style="left:613.40px;top:178px;letter-spacing:0.310px;color:#000">Winlogon</div>
<div class="t" style="left:975.80px;top:178px;letter-spacing:-1.443px;color:#000">811</div>
<div class="t" style="left:1020.30px;top:178px;letter-spacing:-0.998px;color:#000">(811)</div>
</div>
<div class="a" style="left:1529px;top:156px;width:25px;height:227px;background:#f0f0f0"></div>
<svg style="left:1536px;top:166.5px" width="10" height="7" viewBox="0 0 10 7"><path d="M1 6 L5 2 L9 6" fill="none" stroke="#606060" stroke-width="2"/></svg>
<svg style="left:1536px;top:367px" width="10" height="7" viewBox="0 0 10 7"><path d="M1 1 L5 5 L9 1" fill="none" stroke="#606060" stroke-width="2"/></svg>
<div class="a" style="left:1529px;top:187px;width:25px;height:25px;background:#cdcdcd"></div>
<div class="a" style="left:303px;top:385px;width:1254px;height:9px;background:#f5f5f5"></div>
<div class="a" style="left:303px;top:394px;width:1254px;height:3px;background:#6b6b6b"></div>
<div class="a" style="left:303px;top:394px;width:1px;height:690px;background:#6b6b6b"></div>
<div class="a" style="left:304px;top:397px;width:1252px;height:687px;background:#f0f0f0"></div>
<div class="a" style="left:1556px;top:394px;width:1px;height:690px;background:#e3e3e3"></div>
<div class="a" style="left:1557px;top:394px;width:3px;height:690px;background:#fbfbfb"></div>
<div class="t" style="left:314.60px;top:404px;letter-spacing:-0.067px;">Event 1, Winlogon</div>
<svg style="left:1524px;top:405px" width="14" height="14" viewBox="0 0 14 14"><path d="M2 2 L12 12 M12 2 L2 12" stroke="#000" stroke-width="3"/></svg>
<div class="a" style="left:310px;top:428px;width:1241px;height:3px;background:#a0a0a0"></div>
<div class="a" style="left:318px;top:473px;width:1223px;height:611px;background:#fff;border:1px solid #d9d9d9;border-bottom:none"></div>
<div class="a" style="left:324px;top:476px;width:1213px;height:606px;background:#f0f0f0"></div>
<div class="a" style="left:401px;top:443px;width:69px;height:30px;background:#f0f0f0;border:1px solid #e0e0e0;border-bottom:none"></div>
<div class="a" style="left:318px;top:440px;width:84px;height:36px;background:#fff;border:1px solid #d9d9d9;border-bottom:none"></div>
<div class="t" style="left:330.70px;top:449px;letter-spacing:-0.740px;">General</div>
<div class="t" style="left:408.10px;top:452px;letter-spacing:-0.537px;">Details</div>
<div class="a" style="left:341px;top:499px;width:1151px;height:308px;background:#f0f0f0;border-top:3px solid #6e6e6e;border-left:3px solid #6e6e6e;border-right:1px solid #fff;border-bottom:1px solid #fff"></div>
<div class="a" style="left:341px;top:499px;width:1150px;height:1px;background:#a0a0a0"></div>
<div class="a" style="left:341px;top:499px;width:1px;height:307px;background:#a0a0a0"></div>
<div class="a" style="left:1490px;top:500px;width:1px;height:306px;background:#e3e3e3"></div>
<div class="a" style="left:341px;top:805px;width:1150px;height:1px;background:#e3e3e3"></div>
<div class="t" style="left:345.80px;top:508px;letter-spacing:0.059px;">Authentication started.</div>
<div class="t" style="left:336.90px;top:833px;letter-spacing:-0.068px;">Log Name:</div>
<div class="t" style="left:497.50px;top:835px;letter-spacing:0.248px;">Microsoft-Windows-Winlogon/Operational</div>
<div class="t" style="left:337.90px;top:865px;letter-spacing:-0.589px;">Source:</div>
<div class="t" style="left:498.50px;top:867px;letter-spacing:0.396px;">Winlogon</div>
<div class="t" style="left:336.90px;top:896px;letter-spacing:-0.491px;">Event ID:</div>
<div class="t" style="left:497.50px;top:898px;letter-spacing:0.000px;">1</div>
<div class="t" style="left:336.90px;top:927px;letter-spacing:-0.406px;">Level:</div>
<div class="t" style="left:497.50px;top:929px;letter-spacing:0.367px;">Information</div>
<div class="t" style="left:336.90px;top:959px;letter-spacing:-0.776px;">User:</div>
<div class="t" style="left:498.50px;top:961px;letter-spacing:-2.604px;">SYSTEM</div>
<div class="t" style="left:337.90px;top:991px;letter-spacing:-0.257px;">OpCode:</div>
<div class="t" style="left:497.50px;top:992px;letter-spacing:-1.302px;">(1)</div>
<div class="t" style="left:336.90px;top:1022px;letter-spacing:0.334px;">More Information:</div>
<div class="t" style="left:501.50px;top:1023px;letter-spacing:-0.120px;color:#0000f0;text-decoration:underline">Event Log Online Help</div>
<div class="t" style="left:734.00px;top:865px;letter-spacing:0.056px;">Logged:</div>
<div class="t" style="left:863.60px;top:867px;letter-spacing:-0.846px;">11/13/2024 9:53:27 PM</div>
<div class="t" style="left:735.00px;top:896px;letter-spacing:-0.404px;">Task Category:</div>
<div class="t" style="left:863.60px;top:898px;letter-spacing:-1.302px;">(1)</div>
<div class="t" style="left:734.00px;top:927px;letter-spacing:-0.229px;">Keywords:</div>
<div class="t" style="left:863.60px;top:929px;letter-spacing:-1.117px;">(35184372088832),(65536)</div>
<div class="t" style="left:735.00px;top:959px;letter-spacing:0.246px;">Computer:</div>
<div class="t" style="left:864.60px;top:961px;letter-spacing:-0.704px;">supercom1</div>
<svg style="left:1382px;top:669px" width="18" height="30" viewBox="0 0 18 30"><g fill="#fff"><rect x="1" y="1" width="7" height="4"/><rect x="9" y="1" width="7" height="4"/><rect x="7" y="3" width="4" height="24"/><rect x="1" y="24" width="7" height="4"/><rect x="9" y="24" width="7" height="4"/></g><g fill="#000"><rect x="2" y="2" width="6" height="2"/><rect x="10" y="2" width="6" height="2"/><rect x="8" y="3" width="2" height="23"/><rect x="2" y="25" width="6" height="2"/><rect x="10" y="25" width="6" height="2"/></g></svg>
<div class="a" style="left:1560px;top:113px;width:6px;height:971px;background:#f0f0f0"></div>
<div class="a" style="left:1566px;top:113px;width:267px;height:971px;background:#fff"></div>
<div class="a" style="left:1566px;top:113px;width:3px;height:971px;background:linear-gradient(to right,#9a9a9a,#6e6e6e)"></div>
<div class="a" style="left:1566px;top:113px;width:267px;height:4px;background:linear-gradient(to bottom,#9a9a9a,#6e6e6e)"></div>
<div class="a" style="left:1569px;top:117px;width:264px;height:1px;background:#fff"></div>
<div class="a" style="left:1569px;top:118px;width:264px;height:28px;background:#f0f0f0"></div>
<div class="t" style="left:1577.10px;top:125px;letter-spacing:-1.133px;font-weight:bold;">Actions</div>
<div class="a" style="left:1569px;top:146px;width:264px;height:1px;background:#a0a0a0"></div>
<div class="a" style="left:1569px;top:147px;width:264px;height:2px;background:#fff"></div>
<div class="a" style="left:1569px;top:149px;width:264px;height:37px;background:linear-gradient(to bottom,#bad2ea,#9bb6d7)"></div>
<div class="t" style="left:1579.60px;top:161px;letter-spacing:0.034px;">Operational</div>
<div class="a" style="left:1569px;top:668px;width:264px;height:38px;background:linear-gradient(to bottom,#bad2ea,#9bb6d7)"></div>
<div class="t" style="left:1578.60px;top:680px;letter-spacing:-0.186px;">Event 1, Winlogon</div>
<svg style="left:1576px;top:195px" width="23" height="22" viewBox="0 0 23 22"><defs><linearGradient id="go1" x1="0" y1="0" x2="0" y2="1"><stop offset="0" stop-color="#f7e7b4"/><stop offset="1" stop-color="#d8b96a"/></linearGradient><linearGradient id="go2" x1="0" y1="0" x2="1" y2="1"><stop offset="0" stop-color="#fbe9b8"/><stop offset="1" stop-color="#e0c27a"/></linearGradient></defs><rect x="15" y="0.6" width="7" height="1.6" fill="#5ee05e"/><path d="M0.8 6 H10 V5 H17.5 V21.5 H1.5 Z" fill="url(#go1)" stroke="#c4a35a" stroke-width="0.9"/><ellipse cx="14" cy="7" rx="2.2" ry="1.1" fill="#4f8ed8"/><path d="M2.5 10.5 H12 L13 11.5 H20.5 L21.8 13.5 L19.5 21.5 H2 Z" fill="url(#go2)" stroke="#c4a35a" stroke-width="0.9"/></svg>
<div class="t" style="left:1616.10px;top:197px;letter-spacing:-0.782px;">Open Saved Log...</div>
<svg style="left:1578px;top:231px" width="23" height="22" viewBox="0 0 23 22"><defs><linearGradient id="gf1" x1="0" y1="0" x2="1" y2="0"><stop offset="0" stop-color="#dbe9f5"/><stop offset="0.5" stop-color="#8aa2b8"/><stop offset="1" stop-color="#4f6377"/></linearGradient></defs><path d="M0.5 0.5 H22.5 V4 L13.5 13 V21 H9.5 V13 L2 4.5 H0.5 Z" fill="url(#gf1)"/><rect x="0.5" y="0.5" width="22" height="1.6" fill="#5d7185"/><rect x="3" y="2.4" width="18" height="1.4" fill="#b8d4ec"/><rect x="9.5" y="19.5" width="4" height="2" fill="#4a5a6a"/><defs><radialGradient id="gsun" cx="0.45" cy="0.4" r="0.6"><stop offset="0" stop-color="#ffe01a"/><stop offset="1" stop-color="#f5950a"/></radialGradient></defs><path d="M1.5 0.5 H13 L13.5 3 L12 4.5 L12.5 7 L10 8 L9.5 10.5 L7 9.5 L5 11 L4 8.5 L2 7 L2.5 4.5 Z" fill="url(#gsun)"/></svg>
<div class="t" style="left:1616.10px;top:233px;letter-spacing:-0.697px;">Create Custom View...</div>
<div class="t" style="left:1615.10px;top:269px;letter-spacing:-0.361px;">Import Custom View...</div>
<div class="a" style="left:1576px;top:295px;width:257px;height:1px;background:#e8e8e8"></div>
<div class="t" style="left:1616.10px;top:307px;letter-spacing:-0.986px;">Clear Log...</div>
<svg style="left:1577px;top:339px" width="23" height="22" viewBox="0 0 23 22"><defs><linearGradient id="gf0" x1="0" y1="0" x2="1" y2="0"><stop offset="0" stop-color="#dbe9f5"/><stop offset="0.5" stop-color="#8aa2b8"/><stop offset="1" stop-color="#4f6377"/></linearGradient></defs><path d="M0.5 0.5 H22.5 V4 L13.5 13 V21 H9.5 V13 L2 4.5 H0.5 Z" fill="url(#gf0)"/><rect x="0.5" y="0.5" width="22" height="1.6" fill="#5d7185"/><rect x="3" y="2.4" width="18" height="1.4" fill="#b8d4ec"/><rect x="9.5" y="19.5" width="4" height="2" fill="#4a5a6a"/></svg>
<div class="t" style="left:1615.10px;top:343px;letter-spacing:-0.443px;">Filter Current Log...</div>
<svg style="left:1576px;top:374px" width="23" height="24" viewBox="0 0 23 24"><rect x="0.8" y="0.8" width="21.4" height="22.4" rx="2" fill="#f6f6f6" stroke="#8c8c8c" stroke-width="1.6"/><rect x="2" y="2" width="19" height="2.5" fill="#dcdcdc"/><rect x="18.5" y="2" width="2" height="2" fill="#5a78a8"/><rect x="3.3" y="5.3" width="16.4" height="13.4" fill="#fff" stroke="#a9adb8" stroke-width="0.9"/><path d="M7.5 5.5 V8.5 H19.5" fill="none" stroke="#a9adb8" stroke-width="0.9"/><rect x="9" y="6.3" width="3" height="1" fill="#c8c8c8"/><rect x="13.5" y="6.3" width="3" height="1" fill="#c8c8c8"/><rect x="5" y="11" width="2" height="2" fill="#26b6f0"/><rect x="8.5" y="11.4" width="8" height="1.4" fill="#b0b0b0"/><rect x="5" y="14.2" width="1.6" height="1.6" fill="#c0c0c0"/><rect x="8.5" y="14.4" width="8" height="1.4" fill="#b0b0b0"/><rect x="9" y="20" width="5" height="2.5" fill="#2ec4f6"/></svg>
<div class="t" style="left:1615.10px;top:379px;letter-spacing:-0.415px;">Properties</div>
<div class="t" style="left:1615.10px;top:415px;letter-spacing:-0.375px;">Disable Log</div>
<svg style="left:1576px;top:446px" width="24" height="24" viewBox="0 0 24 24"><rect x="2" y="0.8" width="7.5" height="16" rx="1.5" fill="#c9d4d6" stroke="#3e4652" stroke-width="1.6"/><rect x="14.5" y="0.8" width="7.5" height="16" rx="1.5" fill="#c9d4d6" stroke="#3e4652" stroke-width="1.6"/><rect x="9.5" y="2.5" width="5" height="11" fill="#9aa4aa" stroke="#3e4652" stroke-width="1.2"/><rect x="3.5" y="11" width="5" height="4" fill="#5a6878"/><rect x="15.5" y="11" width="5" height="4" fill="#5a6878"/><circle cx="5.8" cy="19.5" r="3.5" fill="#2a9ee8"/><circle cx="18.2" cy="19.5" r="3.5" fill="#2a9ee8"/><path d="M1 18 V21.5 M1.5 23.2 H10 M10.5 18 V22 M13.5 18 V22 M14 23.2 H22.5 M23 18 V22" stroke="#3e4652" stroke-width="1" stroke-dasharray="1.5 1"/></svg>
<div class="t" style="left:1615.10px;top:451px;letter-spacing:-0.886px;">Find...</div>
<svg style="left:1578px;top:482px" width="22" height="23" viewBox="0 0 22 23"><path d="M0 0 H21.5 V23 H3 L0 20.5 Z" fill="#3a3a3a"/><rect x="3" y="0.6" width="15.5" height="12" fill="#f2f2f2"/><rect x="3" y="0.6" width="15.5" height="1.2" fill="#b0b0b0"/><rect x="0" y="2" width="1.6" height="2" fill="#fff"/><rect x="20" y="2" width="1.6" height="2" fill="#fff"/><rect x="4" y="16" width="14" height="6.5" fill="#cfcfcf"/><rect x="6" y="16" width="3" height="5.5" fill="#2a2a2a"/></svg>
<div class="t" style="left:1616.10px;top:487px;letter-spacing:-0.974px;">Save All Events As...</div>
<div class="t" style="left:1616.10px;top:523px;letter-spacing:-0.615px;">Attach a Task To this Log...</div>
<div class="a" style="left:1576px;top:548px;width:257px;height:1px;background:#e8e8e8"></div>
<div class="t" style="left:1616.10px;top:560px;letter-spacing:-1.397px;">View</div>
<div class="a" style="left:1576px;top:586px;width:257px;height:1px;background:#e8e8e8"></div>
<svg style="left:1579px;top:593px" width="20" height="24" viewBox="0 0 20 24"><path d="M0.8 0.8 H14 L19.2 6 V23.2 H0.8 Z" fill="#f8f8f8" stroke="#9a9a9a" stroke-width="1.5"/><path d="M14 0.8 V6 H19.2" fill="#dedede" stroke="#b0b0b0" stroke-width="1"/><path d="M13.5 15.5 A5.2 5.2 0 1 1 14 9.5" fill="none" stroke="#3cc43c" stroke-width="2.8"/><path d="M11 14 L18 12.5 L15 19 Z" fill="#22b022"/></svg>
<div class="t" style="left:1615.10px;top:597px;letter-spacing:-0.653px;">Refresh</div>
<div class="a" style="left:1576px;top:623px;width:257px;height:1px;background:#e8e8e8"></div>
<svg style="left:1578px;top:631px" width="20" height="25" viewBox="0 0 20 25"><defs><linearGradient id="gh" x1="0" y1="0" x2="1" y2="1"><stop offset="0" stop-color="#4a74d8"/><stop offset="1" stop-color="#8aa8ea"/></linearGradient></defs><rect x="0" y="0" width="20" height="25" fill="url(#gh)"/><rect x="0" y="0" width="4.5" height="25" fill="#2f4ea8"/><rect x="0.5" y="0.5" width="19" height="24" fill="none" stroke="#2a43a0" stroke-width="1"/><text x="11" y="20" text-anchor="middle" font-family="Liberation Sans" font-weight="bold" font-size="20" fill="#fff">?</text></svg>
<div class="t" style="left:1615.10px;top:635px;letter-spacing:-0.336px;">Help</div>
<svg style="left:1576px;top:712px" width="23" height="24" viewBox="0 0 23 24"><rect x="0.8" y="0.8" width="21.4" height="22.4" rx="2" fill="#f6f6f6" stroke="#8c8c8c" stroke-width="1.6"/><rect x="2" y="2" width="19" height="2.5" fill="#dcdcdc"/><rect x="18.5" y="2" width="2" height="2" fill="#5a78a8"/><rect x="3.3" y="5.3" width="16.4" height="13.4" fill="#fff" stroke="#a9adb8" stroke-width="0.9"/><path d="M7.5 5.5 V8.5 H19.5" fill="none" stroke="#a9adb8" stroke-width="0.9"/><rect x="9" y="6.3" width="3" height="1" fill="#c8c8c8"/><rect x="13.5" y="6.3" width="3" height="1" fill="#c8c8c8"/><rect x="5" y="11" width="2" height="2" fill="#26b6f0"/><rect x="8.5" y="11.4" width="8" height="1.4" fill="#b0b0b0"/><rect x="5" y="14.2" width="1.6" height="1.6" fill="#c0c0c0"/><rect x="8.5" y="14.4" width="8" height="1.4" fill="#b0b0b0"/><rect x="9" y="20" width="5" height="2.5" fill="#2ec4f6"/></svg>
<div class="t" style="left:1615.10px;top:717px;letter-spacing:-0.484px;">Event Properties</div>
<svg style="left:1576px;top:747px" width="25" height="25" viewBox="0 0 25 25"><rect x="3.5" y="2" width="20" height="20.5" fill="#f3f3f3" stroke="#9a9a9a" stroke-width="1.2"/><rect x="3.5" y="1.5" width="20" height="3" fill="#9a6a50"/><rect x="4" y="19" width="20" height="3.5" fill="#a8a8a8"/><circle cx="14.5" cy="11.5" r="6" fill="#e6f2f4" stroke="#707070" stroke-width="1.4"/><path d="M14.5 11.5 L14.5 6.5 A5 5 0 0 1 19.5 11.5 Z" fill="#e8d48a"/><path d="M14 7 V12 H18" fill="none" stroke="#4a6070" stroke-width="1.4"/><g fill="#f5a820"><circle cx="5.5" cy="5.5" r="3"/><path d="M5.5 0 L6.5 3 L5.5 11 L4.5 3 Z M0 5.5 L3 4.5 L11 5.5 L3 6.5 Z M1.8 1.8 L4.5 4 L9.2 9.2 L4 4.5 Z M9.2 1.8 L7 4.5 L1.8 9.2 L4.5 7 Z"/></g></svg>
<div class="t" style="left:1616.10px;top:753px;letter-spacing:-0.700px;">Attach Task To This Event...</div>
<svg style="left:1577px;top:784px" width="24" height="24" viewBox="0 0 24 24"><rect x="0.8" y="0.8" width="9.5" height="17" fill="#fff" stroke="#8c8c8c" stroke-width="1.5"/><rect x="3" y="6" width="2.5" height="1" fill="#3a78d0"/><rect x="3" y="9" width="6" height="1" fill="#3a78d0"/><rect x="3" y="12" width="6" height="1" fill="#3a78d0"/><path d="M9.8 5 H14 L15 6 H19 L23.2 10 V23.2 H9.8 Z" fill="#fff" stroke="#8c8c8c" stroke-width="1.5"/><rect x="12" y="12" width="2.5" height="1" fill="#3a78d0"/><rect x="12" y="15" width="9" height="1.2" fill="#3a78d0"/><rect x="12" y="18" width="9" height="1.2" fill="#3a78d0"/></svg>
<div class="t" style="left:1616.10px;top:789px;letter-spacing:-0.907px;">Copy</div>
<svg style="left:1578px;top:820px" width="22" height="23" viewBox="0 0 22 23"><path d="M0 0 H21.5 V23 H3 L0 20.5 Z" fill="#3a3a3a"/><rect x="3" y="0.6" width="15.5" height="12" fill="#f2f2f2"/><rect x="3" y="0.6" width="15.5" height="1.2" fill="#b0b0b0"/><rect x="0" y="2" width="1.6" height="2" fill="#fff"/><rect x="20" y="2" width="1.6" height="2" fill="#fff"/><rect x="4" y="16" width="14" height="6.5" fill="#cfcfcf"/><rect x="6" y="16" width="3" height="5.5" fill="#2a2a2a"/></svg>
<div class="t" style="left:1616.10px;top:825px;letter-spacing:-0.964px;">Save Selected Events...</div>
<div class="a" style="left:1576px;top:850px;width:257px;height:1px;background:#e8e8e8"></div>
<svg style="left:1579px;top:857px" width="20" height="24" viewBox="0 0 20 24"><path d="M0.8 0.8 H14 L19.2 6 V23.2 H0.8 Z" fill="#f8f8f8" stroke="#9a9a9a" stroke-width="1.5"/><path d="M14 0.8 V6 H19.2" fill="#dedede" stroke="#b0b0b0" stroke-width="1"/><path d="M13.5 15.5 A5.2 5.2 0 1 1 14 9.5" fill="none" stroke="#3cc43c" stroke-width="2.8"/><path d="M11 14 L18 12.5 L15 19 Z" fill="#22b022"/></svg>
<div class="t" style="left:1615.10px;top:861px;letter-spacing:-0.653px;">Refresh</div>
<div class="a" style="left:1576px;top:888px;width:257px;height:1px;background:#e8e8e8"></div>
<svg style="left:1578px;top:895px" width="20" height="25" viewBox="0 0 20 25"><defs><linearGradient id="gh" x1="0" y1="0" x2="1" y2="1"><stop offset="0" stop-color="#4a74d8"/><stop offset="1" stop-color="#8aa8ea"/></linearGradient></defs><rect x="0" y="0" width="20" height="25" fill="url(#gh)"/><rect x="0" y="0" width="4.5" height="25" fill="#2f4ea8"/><rect x="0.5" y="0.5" width="19" height="24" fill="none" stroke="#2a43a0" stroke-width="1"/><text x="11" y="20" text-anchor="middle" font-family="Liberation Sans" font-weight="bold" font-size="20" fill="#fff">?</text></svg>
<div class="t" style="left:1615.10px;top:900px;letter-spacing:-0.336px;">Help</div>
</body></html>
